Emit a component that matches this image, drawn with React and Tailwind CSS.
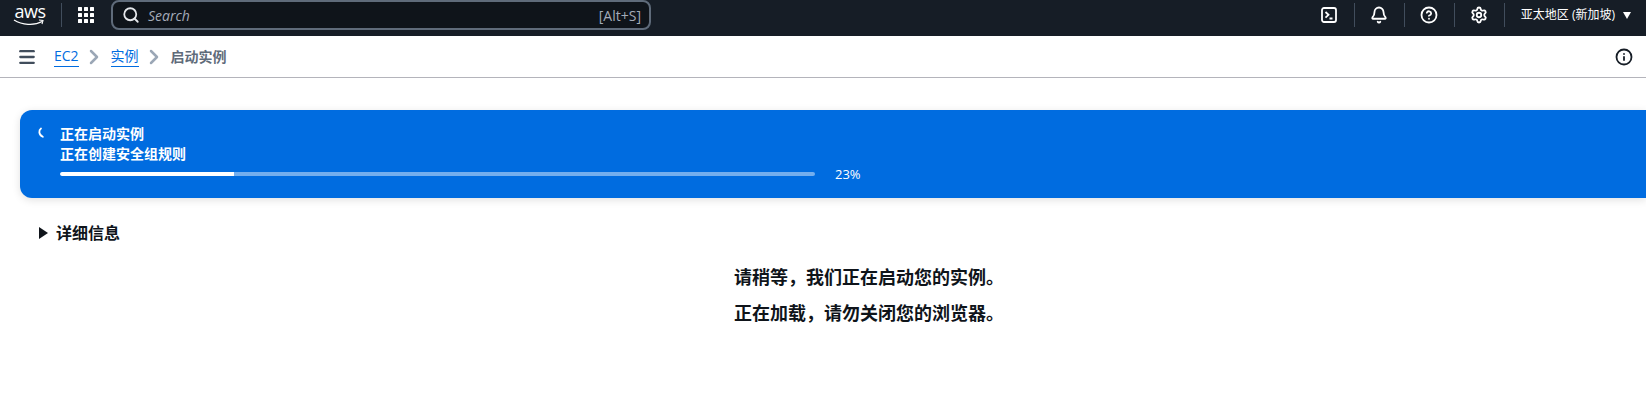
import React from 'react';
import { Bell, ChevronRight, CircleHelp, Info, Menu, Search, Settings } from 'lucide-react';

const FONT = "font-['Open_Sans','Noto_Sans_CJK_SC',sans-serif]";

const Divider = () => <div className="w-px h-[24px] bg-[#414d5c]" />;

const IconCell = ({ children }) => (
  <div className="w-[49px] flex items-center justify-center text-white">{children}</div>
);

const GridIcon = () => (
  <svg width="16" height="16" viewBox="0 0 16 16" fill="#fff">
    {[0, 6, 12].map((y) =>
      [0, 6, 12].map((x) => <rect key={`${x}-${y}`} x={x} y={y} width="4" height="4" rx="0.5" />)
    )}
  </svg>
);

const TerminalIcon = () => (
  <svg width="16" height="16" viewBox="0 0 16 16" fill="none" stroke="#fff" strokeWidth="1.8">
    <rect x="1" y="1" width="14" height="14" rx="2" />
    <path d="M4.5 5l3 2.8-3 2.8M8.5 11.500h3" />
  </svg>
);

const Spinner = () => (
  <svg width="8" height="12" viewBox="0 0 8 12" fill="none" stroke="#fff" strokeWidth="1.8">
    <path d="M4 1.500C1.800 3 1.200 7.600 5.800 9.800" strokeLinecap="round" />
  </svg>
);

const TopNav = () => (
  <header className="h-[36px] bg-[#161d26] flex items-start">
    <div className="w-[61px] h-[27px] mt-[2px] pr-[1px] relative flex justify-center">
      <span className="text-white text-[18px] leading-[18px] font-['Open_Sans',sans-serif] tracking-[-0.5px]">aws</span>
      <svg className="absolute left-[13px] top-[17px]" width="32" height="8" viewBox="0 0 32 8" fill="none">
        <path d="M1 1c8 5 20 6 28 1.500" stroke="#fff" strokeWidth="1.300" />
        <path d="M26 1l4 0.500-1 3.500" stroke="#fff" strokeWidth="1.100" />
      </svg>
    </div>
    <div className="w-px h-[24px] mt-[3px] bg-[#414d5c]" />
    <div className="ml-[16px] mt-[7px]"><GridIcon /></div>
    <div className="ml-[17px] w-[540px] h-[30px] rounded-[8px] border-2 border-[#5f6b7a] bg-[#0f141a] flex items-center pl-[9px] pr-[8px]">
      <Search size={18} color="#e5e7eb" strokeWidth={2.4} />
      <span className="ml-[8px] text-[14px] italic text-[#a4abb8]">Search</span>
      <span className="ml-auto text-[14px] text-[#a4abb8]">[Alt+S]</span>
    </div>
    <div className="ml-auto h-[30px] flex items-center">
      <IconCell><TerminalIcon /></IconCell>
      <Divider />
      <IconCell><Bell size={18} strokeWidth={2.4} /></IconCell>
      <Divider />
      <IconCell><CircleHelp size={18} strokeWidth={2.4} /></IconCell>
      <Divider />
      <IconCell><Settings size={18} strokeWidth={2.4} /></IconCell>
      <Divider />
      <span className="ml-[16px] text-[12px] text-white">亚太地区 (新加坡)</span>
      <span className="ml-[8px] mr-[15px] w-0 h-0 border-x-[4.500px] border-x-transparent border-t-[7px] border-t-white" />
    </div>
  </header>
);

const Breadcrumbs = () => (
  <nav className="h-[42px] bg-white border-b border-[#b4b4bb] flex items-center pl-[17px] pr-[13px]">
    <Menu size={20} color="#414d5c" strokeWidth={2.8} />
    <a className="ml-[17px] text-[14px] leading-[20px] text-[#006ce0] border-b border-[#006ce0]">EC2</a>
    <ChevronRight className="ml-[3px] mr-[5px]" size={24} color="#9ba7b6" strokeWidth={2.500} />
    <a className="text-[14px] leading-[20px] text-[#006ce0] border-b border-[#006ce0]">实例</a>
    <ChevronRight className="ml-[3px] mr-[5px]" size={24} color="#9ba7b6" strokeWidth={2.500} />
    <span className="text-[14px] font-semibold text-[#5f6b7a]">启动实例</span>
    <Info className="ml-auto" size={18} color="#161d26" strokeWidth={2.400} />
  </nav>
);

const ProgressBanner = () => (
  <section className="ml-[20px] mt-[32px] h-[88px] bg-[#006ce0] rounded-l-[12px] shadow-[0_2px_8px_rgba(0,0,0,0.12)] flex items-start pl-[17px] pt-[14px] text-white">
    <div className="w-[23px] pt-[3px]"><Spinner /></div>
    <div>
      <div className="text-[14px] leading-[20px] font-bold">正在启动实例</div>
      <div className="text-[14px] leading-[20px] font-bold">正在创建安全组规则</div>
      <div className="flex items-center mt-[1px]">
        <div className="w-[755px] h-[4px] rounded-full bg-white/45 overflow-hidden">
          <div className="h-full bg-white rounded-l-full" style={{ width: '23%' }} />
        </div>
        <span className="ml-[20px] text-[13px] leading-[18px]">23%</span>
      </div>
    </div>
  </section>
);

export default function App() {
  return (
    <div className={`${FONT} w-[1646px] h-[400px] overflow-hidden bg-white`}>
      <TopNav />
      <Breadcrumbs />
      <ProgressBanner />
      <div className="ml-[39px] mt-[24px] flex items-center text-[#0f141a]">
        <span className="w-0 h-0 border-y-[6px] border-y-transparent border-l-[9px] border-l-[#0f141a]" />
        <span className="ml-[8px] text-[16px] leading-[22px] font-bold">详细信息</span>
      </div>
      <div className="mt-[15px] pl-[734px] text-[#0f141a] text-[18px] leading-[36px] font-bold">
        <p>请稍等，我们正在启动您的实例。</p>
        <p>正在加载，请勿关闭您的浏览器。</p>
      </div>
    </div>
  );
}
